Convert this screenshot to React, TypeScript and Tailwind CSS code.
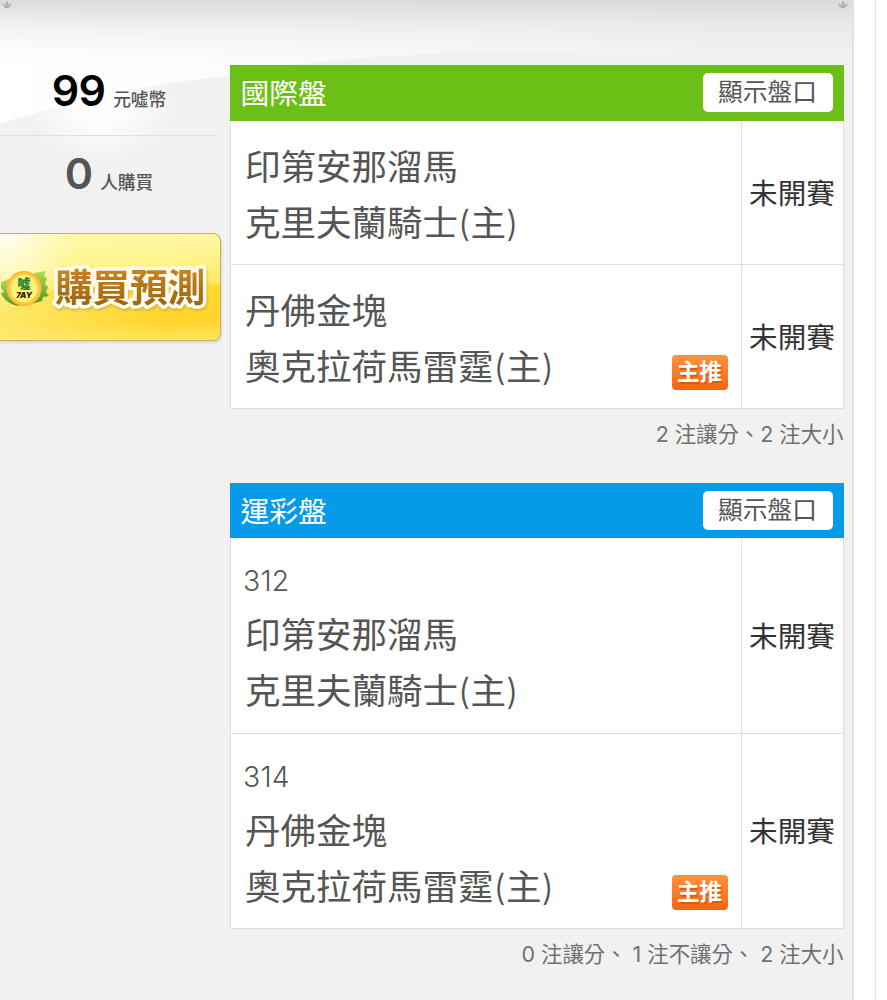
import React from 'react';
import clsx from 'clsx';

interface Match {
  no?: string;
  away: string;
  home: string;
  status: string;
  featured?: boolean;
}

interface BoardProps {
  title: string;
  color: 'green' | 'blue';
  matches: Match[];
  summary: string;
}

const internationalMatches: Match[] = [
  { away: '印第安那溜馬', home: '克里夫蘭騎士', status: '未開賽' },
  { away: '丹佛金塊', home: '奧克拉荷馬雷霆', status: '未開賽', featured: true },
];

const lotteryMatches: Match[] = [
  { no: '312', away: '印第安那溜馬', home: '克里夫蘭騎士', status: '未開賽' },
  { no: '314', away: '丹佛金塊', home: '奧克拉荷馬雷霆', status: '未開賽', featured: true },
];

const Backdrop = () => (
  <svg className="absolute left-0 top-0" width="852" height="200" viewBox="0 0 852 200" aria-hidden="true">
    <defs>
      <linearGradient id="shade" x1="0" y1="0" x2="0" y2="1">
        <stop offset="0" stopColor="#dadada" />
        <stop offset="0.35" stopColor="#dedede" stopOpacity="0.5" />
        <stop offset="1" stopColor="#f1f1f1" stopOpacity="0" />
      </linearGradient>
      <linearGradient id="sweep" x1="0" y1="0" x2="1" y2="0">
        <stop offset="0" stopColor="#fff" />
        <stop offset="0.25" stopColor="#fff" stopOpacity="0.8" />
        <stop offset="0.65" stopColor="#fff" stopOpacity="0.5" />
        <stop offset="1" stopColor="#fff" stopOpacity="0" />
      </linearGradient>
      <radialGradient id="glow">
        <stop offset="0" stopColor="#fff" />
        <stop offset="0.4" stopColor="#fff" stopOpacity="0.75" />
        <stop offset="1" stopColor="#fff" stopOpacity="0" />
      </radialGradient>
    </defs>
    <path d="M0 124C75 100 145 84 230 76C350 48 610 44 722 66V0H0Z" fill="url(#sweep)" />
    <ellipse cx="100" cy="106" rx="76" ry="56" fill="url(#glow)" />
    <rect width="852" height="62" fill="url(#shade)" />
  </svg>
);

const Screw = () => (
  <svg width="10" height="9" viewBox="0 0 10 9" aria-hidden="true">
    <circle cx="5" cy="3.8" r="4.3" fill="#a9a9a9" />
    <circle cx="5" cy="2" r="4" fill="#dedede" />
    <path d="M5 1V5M3 3.5L5 5.5L7 3.5" stroke="#8c8c8c" strokeWidth="0.9" fill="none" />
  </svg>
);

const CoinIcon = () => (
  <svg width="49" height="38" viewBox="0 0 49 38" className="mt-1 shrink-0" aria-hidden="true">
    <defs>
      <linearGradient id="leaf" x1="0" y1="0" x2="0" y2="1">
        <stop offset="0" stopColor="#b8dc55" />
        <stop offset="1" stopColor="#439a22" />
      </linearGradient>
      <radialGradient id="coin">
        <stop offset="0.5" stopColor="#fff36b" />
        <stop offset="1" stopColor="#ffb531" />
      </radialGradient>
    </defs>
    <path d="M1 12L9 9L20 36L14 35C7 32 2 27 1 23L4 22L1 18Z" fill="url(#leaf)" />
    <path d="M34 3L46 1L44 6L47 8L45 14L48 17L46 22L49 26L43 27L42 31L31 34Z" fill="url(#leaf)" />
    <circle cx="24" cy="18.5" r="17.5" fill="url(#coin)" />
    <circle cx="24" cy="18.5" r="13.5" fill="#fff172" />
    <text x="24" y="18" textAnchor="middle" fontSize="13" fontWeight="900" fill="#258237" fontFamily="Noto Sans CJK TC, sans-serif">噓</text>
    <text x="24" y="28" textAnchor="middle" fontSize="8" fontWeight="900" fontStyle="italic" fill="#252b16" fontFamily="Inter, sans-serif">7AY</text>
  </svg>
);

const BuyButton = () => (
  <button
    type="button"
    className="mt-[33px] flex h-[108px] w-[221px] items-center rounded-r-lg border border-l-0 border-[#c9b25f] bg-[radial-gradient(circle_at_0%_0%,#fffef0_0%,#fffbc900_32%),linear-gradient(90deg,#fff69e88_0%,#fff69e00_75%),linear-gradient(178deg,#fffbb0_0%,#fff38b_28%,#ffea65_48%,#ffd92f_53%,#ffd52c_82%,#ffe65c_100%)] shadow-[1px_2px_2px_#d8d8d4]"
  >
    <CoinIcon />
    <svg width="168" height="62" viewBox="0 0 168 62" className="-ml-0.5 shrink-0">
      <defs>
        <linearGradient id="gold" x1="0" y1="0" x2="0" y2="1">
          <stop offset="0.1" stopColor="#d18a27" />
          <stop offset="1" stopColor="#94600d" />
        </linearGradient>
      </defs>
      <text
        x="8"
        y="45"
        fontSize="37.6"
        fontWeight="700"
        fill="url(#gold)"
        stroke="#fffdf0"
        strokeWidth="7"
        strokeLinejoin="round"
        paintOrder="stroke"
        className="drop-shadow-[1px_2px_1px_#b9973888]"
        fontFamily="Noto Sans CJK TC, sans-serif"
      >
        購買預測
      </text>
    </svg>
  </button>
);

const Sidebar = () => (
  <aside className="relative w-[229.5px] shrink-0 pt-16 text-[#555]">
    <div className="flex h-[72px] w-[218px] items-baseline justify-center border-b border-[#e0e0e0]">
      <strong className="text-[43px] leading-[53px] font-semibold tracking-[-0.8px] text-black">99</strong>
      <span className="ml-2 text-[17.7px] font-medium">元噓幣</span>
    </div>
    <div className="mt-[11px] flex h-[53px] w-[218px] items-baseline justify-center">
      <strong className="text-[43px] leading-[53px] font-semibold">0</strong>
      <span className="ml-[7px] text-[17.7px] font-medium">人購買</span>
    </div>
    <BuyButton />
  </aside>
);

const MatchRow = ({ match }: { match: Match }) => (
  <div className={clsx('flex border-b border-[#dedede]', match.no ? 'h-[195.5px]' : 'h-36')}>
    <div
      className={clsx(
        'relative flex-1 border-r border-[#dedede] pl-[14.5px] text-[35.5px] leading-14 text-[#555]',
        match.no ? 'pt-[15px]' : 'pt-[19px]'
      )}
    >
      {match.no && <div className="-mb-px -ml-0.5 text-[28.4px] font-light tracking-[0.2px]">{match.no}</div>}
      <div>{match.away}</div>
      <div>
        {match.home}
        <span className="font-light">(</span>主<span className="font-light">)</span>
      </div>
      {match.featured && (
        <span className="absolute right-[13px] bottom-[18px] flex h-[35px] w-14 items-center justify-center rounded bg-linear-to-b from-[#ff9238] to-[#f7650a] text-[22.5px] leading-none font-bold text-white [text-shadow:1px_2px_1px_#d85a06]">
          主推
        </span>
      )}
    </div>
    <div className="flex w-[101px] items-center justify-center pt-1 text-[28.6px] whitespace-nowrap text-[#333]">{match.status}</div>
  </div>
);

const Board: React.FC<BoardProps> = ({ title, color, matches, summary }) => (
  <section>
    <header
      className={clsx(
        'flex items-center justify-between px-[11px] text-white',
        color === 'green' ? 'h-14 bg-[#6bbf16]' : 'h-[55px] bg-[#069be8]'
      )}
    >
      <h2 className="pt-0.5 text-[28.8px]">{title}</h2>
      <button type="button" className="mb-px h-[39px] w-[130px] rounded-[5px] bg-white text-[24.7px] leading-[39px] text-[#555]">
        顯示盤口
      </button>
    </header>
    <div className="border-x border-[#dedede] bg-white">
      {matches.map((match) => (
        <MatchRow key={match.away} match={match} />
      ))}
    </div>
    <p className="h-[74px] pt-[9px] text-right text-[21.4px] leading-8 whitespace-pre text-[#707070]">{summary}</p>
  </section>
);

export default function App() {
  return (
    <div className="flex h-[1000px] w-[887px] overflow-hidden bg-white font-['Inter','Noto_Sans_CJK_TC',sans-serif]" lang="zh-Hant">
      <div className="relative flex w-[854px] shrink-0 border-r-2 border-[#e0e0e0] bg-[#f1f1f1]">
        <Backdrop />
        <div className="absolute top-0 left-0.5"><Screw /></div>
        <div className="absolute top-0 right-1"><Screw /></div>
        <Sidebar />
        <main className="relative w-[614px] pt-[65px]">
          <Board title="國際盤" color="green" matches={internationalMatches} summary="2 注讓分、2 注大小" />
          <Board title="運彩盤" color="blue" matches={lotteryMatches} summary="0 注讓分、 1 注不讓分、 2 注大小" />
        </main>
      </div>
      <div className="w-[22px] border-r border-[#dedede]" />
    </div>
  );
}
